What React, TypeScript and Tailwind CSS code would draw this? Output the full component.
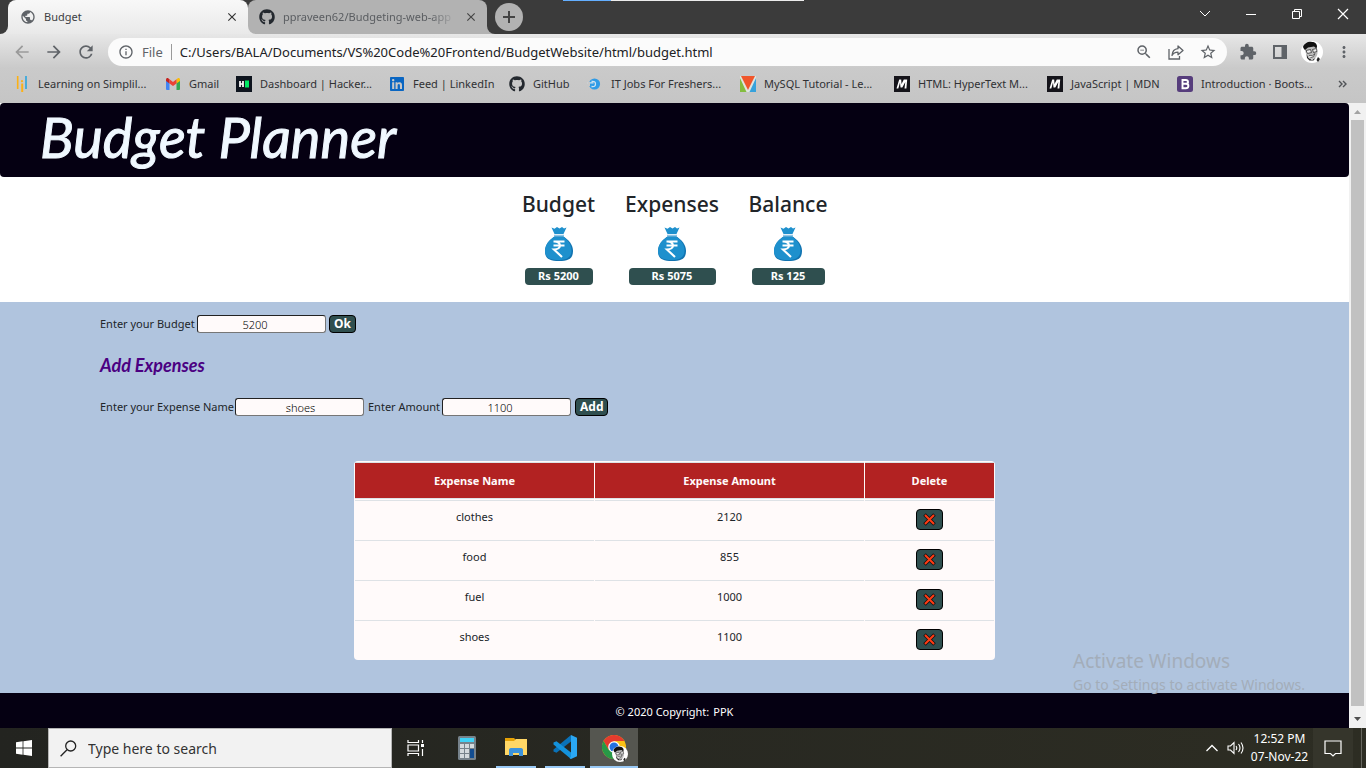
import React, { useState } from "react";
import {
  MdArrowBack,
  MdArrowForward,
  MdClose,
  MdExtension,
  MdInfoOutline,
  MdMoreVert,
  MdPublic,
  MdRefresh,
  MdStarBorder,
  MdZoomOut,
} from "react-icons/md";
import { FaGithub, FaLinkedin } from "react-icons/fa";

function Avatar({ className }: { className: string }) {
  return (
    <svg viewBox="0 0 22 22" className={className} aria-hidden="true">
      <circle cx="11" cy="11" r="11" fill="#fff" />
      <path d="M4 7c2-2 9-3 11-1l1.500 5c0 4-2 7-5 7-4 0-6-4-7-7z" fill="#bdbdbd" />
      <path d="M2 6C3 2 8 0 11 1c3 0 5 2 5 4.500l-.5 2-2.500-2-6 1L4 9 3 8z" fill="#111" />
      <path d="M5 9.500l4.500-1 1 3-4 1zM11.500 8.500l4-1 .5 3-3.500 1z" fill="#eee" stroke="#333" strokeWidth=".8" />
      <path d="M8 14.500q4 1.500 6-2-.5 4-5 4.500" fill="#fff" stroke="#333" strokeWidth=".7" />
      <path d="M5.500 13l2 4 3.500 2 3.500-2-2 2.500-4 0-2.500-2.500zM17 16l2 2-2 3-1.500-2z" fill="#222" />
    </svg>
  );
}

function SimpliIcon() {
  return (
    <svg viewBox="0 0 16 16" className="size-4">
      <path d="M3.7 0v13" stroke="#fbb116" strokeWidth="1.6" />
      <path d="M12 0v13" stroke="#3ba9dc" strokeWidth="1.8" />
      <path d="M8.2 7.5V16" stroke="#fbb116" strokeWidth="2" />
      <circle cx="8" cy="5.2" r="1.1" fill="#fbb116" />
    </svg>
  );
}
function GmailIcon() {
  return (
    <svg viewBox="0 0 16 16" className="size-4">
      <path d="M1 4v9a1 1 0 0 0 1 1h2.5V6.5z" fill="#4285f4" />
      <path d="M15 4v9a1 1 0 0 1-1 1h-2.500V6.500z" fill="#34a853" />
      <path d="M11.500 3.500v4L15 5V4c0-2-1.600-2.300-2.500-1.500z" fill="#fbbc04" />
      <path d="M4.500 3.500v4L1 5V4c0-2 1.600-2.300 2.500-1.500z" fill="#c5221f" />
      <path d="M4.500 3.300L8 6l3.500-2.700v4.200L8 10 4.500 7.500z" fill="#ea4335" />
    </svg>
  );
}
function HackerIcon() {
  return (
    <svg viewBox="0 0 16 16" className="size-4">
      <path d="M0 0h16v16H0z" fill="#0e141e" />
      <path d="M4 5v6M7 5v6M4 8h3" stroke="#fff" strokeWidth="1.700" />
      <path d="M9 4.500h4v7H9z" fill="#00ea64" />
    </svg>
  );
}
function JobsIcon() {
  return (
    <svg viewBox="0 0 16 16" className="size-4">
      <circle cx="7.500" cy="8" r="5.600" fill="#2f9be6" />
      <path d="M0 6.800h6.500M4.500 5.500q4-.8 4 2.500t-4 2.500" fill="none" stroke="#cfe3f0" strokeWidth="1.300" />
      <path d="M0 4.500l3 1.500v4l-2 0z" fill="#c8c8c8" />
    </svg>
  );
}
function MysqlIcon() {
  return (
    <svg viewBox="0 0 16 16" className="size-4">
      <path d="M0 0h16v16H0z" fill="#dfe5de" />
      <path d="M1 0h14L8 14z" fill="#f0562b" />
      <path d="M0 2l6.500 14H0z" fill="#83bd3f" />
      <path d="M16 2L9.500 16H16z" fill="#36a2dc" />
    </svg>
  );
}
function MdnIcon() {
  return (
    <svg viewBox="0 0 16 16" className="size-4">
      <path d="M0 0h16v16H0z" fill="#15141a" />
      <path d="M2.500 12.500L5.200 3.500h2l.3 4.500 2.300-4.500h3.400l-.8 9h-1.900l.8-6.500-3 5.500H6.500L6 6.500l-1.700 6z" fill="#fff" />
    </svg>
  );
}
function BootstrapIcon() {
  return (
    <svg viewBox="0 0 16 16" className="size-4">
      <rect width="16" height="16" rx="2.500" fill="#563d7c" />
      <path d="M5.500 4h3.300c2.800 0 2.900 3.300.5 3.800 3 .4 2.700 4.400-.5 4.400H5.500zM6 7.800h3.500" fill="none" stroke="#fff" strokeWidth="1.900" />
    </svg>
  );
}

const bookmarks = [
  { label: "Learning on Simplil...", icon: <SimpliIcon />, width: "w-[151px]" },
  { label: "Gmail", icon: <GmailIcon />, width: "w-[71px]" },
  { label: "Dashboard | Hacker...", icon: <HackerIcon />, width: "w-[153px]" },
  { label: "Feed | LinkedIn", icon: <FaLinkedin className="size-4 text-[#0a66c2]" />, width: "w-[120px]" },
  { label: "GitHub", icon: <FaGithub className="size-4 text-[#24292f]" />, width: "w-[78px]" },
  { label: "IT Jobs For Freshers...", icon: <JobsIcon />, width: "w-[153px]" },
  { label: "MySQL Tutorial - Le...", icon: <MysqlIcon />, width: "w-[154px]" },
  { label: "HTML: HyperText M...", icon: <MdnIcon />, width: "w-[153px]" },
  { label: "JavaScript | MDN", icon: <MdnIcon />, width: "w-[130px]" },
  { label: "Introduction · Boots...", icon: <BootstrapIcon />, width: "w-[150px]" },
];

function TabStrip() {
  return (
    <div className="flex h-[34px] bg-[#3b3b3b]">
      <div className="w-2 bg-[#e9e9e9]"><div className="h-full rounded-br-lg bg-[#3b3b3b]" /></div>
      <div className="flex w-60 items-center rounded-t-lg bg-linear-to-b from-[#f8f8f8] to-[#e9e9e9] pr-[9px] pl-3">
        <MdPublic className="size-4 text-[#5f6368]" />
        <span className="ml-2 flex-1 text-[#3c4043]">Budget</span>
        <button aria-label="Close Budget tab"><MdClose className="size-3.5 text-[#333]" /></button>
      </div>
      <div className="bg-linear-to-b from-[#3b3b3b] from-50% to-[#e9e9e9] to-50%">
        <div className="flex h-full w-[239px] items-center rounded-t-lg rounded-bl-lg bg-[#b2b2b2] pr-[9px] pl-[11px] text-[#5a5d61]">
          <FaGithub className="size-4 shrink-0 text-[#24292f]" />
          <span className="ml-2 flex-1 overflow-hidden whitespace-nowrap mask-r-from-85%">ppraveen62/Budgeting-web-app</span>
          <button aria-label="Close repository tab" className="ml-2"><MdClose className="size-3.5 text-[#444]" /></button>
        </div>
      </div>
      <div className="w-2 bg-[#b2b2b2]"><div className="h-full rounded-bl-lg bg-[#3b3b3b]" /></div>
      <button aria-label="New tab" className="mt-[3px] grid size-7 place-items-center rounded-full bg-[#b2b2b2]">
        <svg viewBox="0 0 12 12" className="size-3"><path d="M6 0v12M0 6h12" stroke="#444" strokeWidth="2" /></svg>
      </button>
      <div className="ml-auto flex h-7 text-white">
        <button aria-label="Search tabs" className="grid w-[46px] place-items-center">
          <svg viewBox="0 0 12 12" className="size-3"><path d="M1 3l5 5 5-5" fill="none" stroke="currentColor" /></svg>
        </button>
        <button aria-label="Minimize" className="grid w-[46px] place-items-center">
          <svg viewBox="0 0 12 12" className="size-3"><path d="M1 6.500h10" stroke="currentColor" /></svg>
        </button>
        <button aria-label="Restore" className="grid w-[46px] place-items-center">
          <svg viewBox="0 0 12 12" className="size-3"><path d="M1.500 3.500h7v7h-7zM3.500 3.500v-2h7v7h-2" fill="none" stroke="currentColor" /></svg>
        </button>
        <button aria-label="Close" className="grid w-[46px] place-items-center">
          <svg viewBox="0 0 12 12" className="size-3"><path d="M1 1l10 10M11 1L1 11" stroke="currentColor" strokeWidth="1.200" /></svg>
        </button>
      </div>
    </div>
  );
}

function Toolbar() {
  return (
    <div className="flex h-[34px] items-center bg-linear-to-b from-[#e7e7e7] to-[#cacaca] pt-1 pb-0.5 text-[#5f6368]">
      <button aria-label="Back" className="ml-3 text-[#9a9a9a]"><MdArrowBack className="size-5" /></button>
      <button aria-label="Forward" className="ml-3"><MdArrowForward className="size-5" /></button>
      <button aria-label="Reload" className="ml-3"><MdRefresh className="size-5" /></button>
      <div className="ml-3 flex h-7 flex-1 items-center rounded-full bg-[#fbfbfb] px-2.5 text-[13px]">
        <MdInfoOutline className="size-4" />
        <span className="ml-2">File</span>
        <span className="mx-2 h-4 w-px bg-[#9a9a9a]" />
        <input
          aria-label="Address"
          className="min-w-0 flex-1 bg-transparent text-[#202124] outline-none"
          defaultValue="C:/Users/BALA/Documents/VS%20Code%20Frontend/BudgetWebsite/html/budget.html"
        />
        <button aria-label="Zoom"><MdZoomOut className="size-[18px]" /></button>
        <button aria-label="Share" className="ml-[15px]">
          <svg viewBox="0 0 16 16" className="size-4" fill="none" stroke="currentColor" strokeWidth="1.300">
            <path d="M1 5v10h10.500v-3" />
            <path d="M10 2l5 4.500-5 4.200V8.200C7 8.200 5 9.500 4 11.500c.3-4 2.500-6.500 6-6.800z" strokeLinejoin="round" />
          </svg>
        </button>
        <button aria-label="Bookmark this page" className="ml-[15px]"><MdStarBorder className="size-[18px]" /></button>
      </div>
      <button aria-label="Extensions" className="ml-3"><MdExtension className="size-[18px]" /></button>
      <button aria-label="Side panel" className="ml-4">
        <svg viewBox="0 0 14 14" className="size-3.5"><path d="M1 1h12v12H1z" fill="none" stroke="currentColor" strokeWidth="2" /><path d="M8.500 1H13v12H8.500z" fill="currentColor" /></svg>
      </button>
      <button aria-label="Profile" className="ml-3.5"><Avatar className="size-[22px]" /></button>
      <button aria-label="Menu" className="mr-[13px] ml-3"><MdMoreVert className="size-[18px]" /></button>
    </div>
  );
}

function Bookmarks() {
  return (
    <nav className="flex h-[35px] items-center overflow-hidden bg-linear-to-b from-[#cacaca] to-[#c5c5c5] pb-1 pl-3.5 text-[#303134]">
      {bookmarks.map((b, i) => (
        <a key={i} href="#" className={"flex shrink-0 items-center gap-2 whitespace-nowrap " + b.width}>
          <span className="shrink-0">{b.icon}</span>
          {b.label}
        </a>
      ))}
      <button aria-label="More bookmarks" className="mr-4.5 ml-auto">
        <svg viewBox="0 0 10 8" className="h-2 w-2.5"><path d="M1 1l3 3-3 3M5 1l3 3-3 3" fill="none" stroke="#505357" strokeWidth="1.400" /></svg>
      </button>
    </nav>
  );
}

function MoneyBag() {
  return (
    <svg viewBox="0 0 32 36" className="h-9 w-8" aria-hidden="true">
      <path d="M8.500 1.500l3 1.200L14 1l2.500 1.500L19 1l2 1.500 2.500-1L20.500 8h-9z" fill="#1e90cd" />
      <path d="M11 8.700h10v1.300H11z" fill="#8fc6e6" />
      <path d="M11.500 10.500h9C26 14 30 19 30 25c0 8-5 10-14 10S2 33 2 25c0-6 4-11 9.500-14.500z" fill="#1173b0" />
      <path d="M11.500 10.500h9C25 14 28.500 19 28.500 24.500c0 7-5 9.500-13 9.500S2 32 2 25c0-6 4-11 9.500-14.500z" fill="#1e90cd" />
      <path d="M10.500 15.500h11M10.500 19.500h11M11 15.500c8 0 8 8 0 8l8 7.500" fill="none" stroke="#fff" strokeWidth="2.100" />
    </svg>
  );
}

const totals = [
  { title: "Budget", amount: 5200, width: "w-[74px]" },
  { title: "Expenses", amount: 5075, width: "w-[93px]" },
  { title: "Balance", amount: 125, width: "w-[79px]" },
];

const initialExpenses = [
  { name: "clothes", amount: 2120 },
  { name: "food", amount: 855 },
  { name: "fuel", amount: 1000 },
  { name: "shoes", amount: 1100 },
];

const fieldClass =
  "h-[18px] w-[129px] rounded-[3px] border border-t-[#222] border-l-[#222] border-r-[#767676] border-b-[#767676] bg-[#fffafa] pr-0.5 pl-1 text-center font-light text-black";
const actionClass =
  "h-[18px] rounded-[4px] border border-black bg-[#2f4f4f] px-1 text-[12px] leading-4 font-bold text-white";

function BudgetPage() {
  const [expenses, setExpenses] = useState(initialExpenses);
  return (
    <div className="flex min-w-0 flex-1 flex-col bg-white text-[#212529]">
      <header className="flex h-[74px] items-center rounded bg-[#050012] px-10 pb-1.5">
        <h1 className="font-[Lato,'Liberation_Sans',sans-serif] text-[56px] leading-[68px] text-[#f0f8ff] italic [-webkit-text-stroke:1px_#f0f8ff]">Budget Planner</h1>
      </header>

      <section className="flex h-[125px] justify-center gap-[30px] pt-3">
        {totals.map((t) => (
          <div key={t.title} className={"flex flex-col items-center " + t.width}>
            <h2 className="text-[21px] leading-[30px] font-medium">{t.title}</h2>
            <div className="mt-[7px]"><MoneyBag /></div>
            <div className="mt-1.5 self-stretch px-[3px]">
              <p className="rounded bg-[#2f4f4f] pb-px text-center leading-4 font-bold text-white">Rs {t.amount}</p>
            </div>
          </div>
        ))}
      </section>

      <main className="relative flex-1 bg-[#b0c4de] pt-[13px]">
        <form className="flex items-center pl-[100px]" onSubmit={(e) => e.preventDefault()}>
          <label htmlFor="budget" className="w-[97px]">Enter your Budget</label>
          <input id="budget" type="number" defaultValue={5200} className={fieldClass} />
          <button className={actionClass + " ml-[3px]"}>Ok</button>
        </form>
        <h3 className="mt-5 pl-[100px] font-[Lato,sans-serif] text-[18px] leading-6 font-bold text-[#4b0082] italic">Add Expenses</h3>
        <form className="mt-[21px] flex items-center pl-[100px]" onSubmit={(e) => e.preventDefault()}>
          <label htmlFor="name" className="w-[135px]">Enter your Expense Name</label>
          <input id="name" type="text" defaultValue="shoes" className={fieldClass} />
          <label htmlFor="amount" className="ml-1 w-[74px]">Enter Amount</label>
          <input id="amount" type="number" defaultValue={1100} className={fieldClass} />
          <button className={actionClass + " ml-1"}>Add</button>
        </form>

        <table className="mx-auto mt-[45px] w-[641px] table-fixed border-separate border-spacing-px rounded bg-[#fffafa] text-center">
          <colgroup>
            <col className="w-[239px]" />
            <col className="w-[269px]" />
            <col className="w-[129px]" />
          </colgroup>
          <thead>
            <tr className="h-[37px] text-[#fffafa]">
              <th className="border-y border-[#dee2e6] bg-[#b22222]">Expense Name</th>
              <th className="border-y border-[#dee2e6] bg-[#b22222]">Expense Amount</th>
              <th className="border-y border-[#dee2e6] bg-[#b22222]">Delete</th>
            </tr>
          </thead>
          <tbody>
            {expenses.map((x) => (
              <tr key={x.name} className="h-[39px] align-top">
                <td className="border-t border-[#dee2e6] pt-2">{x.name}</td>
                <td className="border-t border-[#dee2e6] pt-2">{x.amount}</td>
                <td className="border-t border-[#dee2e6] pt-2">
                  <button
                    aria-label={"Delete " + x.name}
                    onClick={() => setExpenses(expenses.filter((e) => e !== x))}
                    className="mx-auto grid h-[21px] w-[27px] place-items-center rounded-[4px] border border-black bg-[#2f4f4f]"
                  >
                    <svg viewBox="0 0 13 13" className="size-[13px]">
                      <path d="M1.500 1.500l10 10M11.500 1.500l-10 10" stroke="#1a1010" strokeWidth="3.600" />
                      <path d="M2 2l9 9M11 2l-9 9" stroke="#ff3c14" strokeWidth="2" />
                    </svg>
                  </button>
                </td>
              </tr>
            ))}
          </tbody>
        </table>

        <div className="absolute right-10 bottom-0 w-[236px] whitespace-nowrap text-[#a3adb9]">
          <p className="mb-1 text-[19px] leading-6">Activate Windows</p>
          <p className="text-sm leading-4">Go to Settings to activate Windows.</p>
        </div>
      </main>

      <footer className="flex h-[35px] items-center justify-center gap-1 bg-[#050012] pt-0.5 text-white">
        © 2020 Copyright: <a href="#">PPK</a>
      </footer>
    </div>
  );
}

function Scrollbar() {
  return (
    <div className="flex w-[17px] shrink-0 flex-col items-center bg-[#f1f1f1]" aria-hidden="true">
      <svg viewBox="0 0 17 17" className="size-[17px]"><path d="M5 11l3.500-4 3.500 4z" fill="#a3a3a3" /></svg>
      <div className="w-[13px] flex-1 bg-[#c1c1c1]" />
      <div className="h-[5px]" />
      <svg viewBox="0 0 17 17" className="size-[17px]"><path d="M5 6l3.500 4L12 6z" fill="#505050" /></svg>
    </div>
  );
}

function Taskbar() {
  return (
    <div className="flex h-10 shrink-0 bg-linear-to-r from-[#232420] to-[#2d2d23] text-white">
      <button aria-label="Start" className="grid w-12 place-items-center">
        <svg viewBox="0 0 16 16" className="size-4" fill="#fff"><path d="M0 2.200l6.600-.9v6.300H0zM7.400 1.200L16 0v7.600H7.400zM0 8.400h6.600v6.300L0 13.800zM7.400 8.400H16V16l-8.600-1.200z" /></svg>
      </button>
      <label className="flex w-[344px] items-center border border-[#b5b5b5] bg-[#f2f2f2] pl-[11px]">
        <svg viewBox="0 0 17 17" className="size-[17px]" fill="none" stroke="#222" strokeWidth="1.300"><circle cx="10.700" cy="6" r="5" /><path d="M7 9.700L.6 16.300" /></svg>
        <input aria-label="Search" placeholder="Type here to search" className="ml-[11px] min-w-0 flex-1 bg-transparent pt-0.5 text-sm outline-none placeholder:text-[#333]" />
      </label>
      <button aria-label="Task view" className="grid w-12 place-items-center">
        <svg viewBox="0 0 18 16" className="h-4 w-[18px]" fill="none" stroke="#fff" strokeWidth="1.200">
          <path d="M1 0v2.500h10.500V0M1 16v-2.500h10.500V16M1 5h10.500v6H1zM15.500 0v3M15.500 9v7" /><path d="M14 4h3v3h-3z" fill="#fff" stroke="none" />
        </svg>
      </button>
      <button aria-label="Calculator" className="ml-0.5 grid w-[50px] place-items-center">
        <svg viewBox="0 0 18 24" className="h-6 w-[18px]">
          <rect width="18" height="24" rx="1.500" fill="#76828b" /><path d="M2 2h14v4H2z" fill="#3fd2f7" />
          <path d="M2 8h4v4H2zM7 8h4v4H7zM12 8h4v4h-4zM2 13h4v4H2zM7 13h4v4H7zM2 18h4v4H2zM7 18h4v4H7z" fill="#d3dade" /><path d="M12 13h4v9h-4z" fill="#124d91" />
        </svg>
      </button>
      <button aria-label="File Explorer" className="mx-1 grid w-10 place-items-center border-b-2 border-[#99c9f5]">
        <svg viewBox="0 0 22 18" className="h-[18px] w-[22px]">
          <path d="M0 0h9l2 2v4H0z" fill="#e5a106" /><path d="M0 3h9l2-2h11v16H0z" fill="#ffd766" />
          <path d="M4 18v-6c0-1 .5-2 2-2h10c1.500 0 2 1 2 2v6h-4v-3H8v3z" fill="#3c93dc" />
        </svg>
      </button>
      <button aria-label="Visual Studio Code" className="mx-[5px] grid w-10 place-items-center border-b-2 border-[#99c9f5]">
        <svg viewBox="0 0 24 24" className="size-6">
          <path d="M18 0v6.500L3.500 17.800.5 16.500v-2z" fill="#0a72b8" /><path d="M18 24v-6.500L3.500 6.200.5 7.500v2z" fill="#1492dc" />
          <path d="M18 0l6 2.800v18.400L18 24l-1.500-1L18 22z" fill="#2aa7f3" />
        </svg>
      </button>
      <button aria-label="Google Chrome" className="relative grid w-12 place-items-center border-b-2 border-[#99c9f5] bg-[#555650]">
        <svg viewBox="0 0 24 24" className="size-6">
          <circle cx="12" cy="12" r="12" fill="#fbc116" />
          <path d="M1.600 6A12 12 0 0 1 22.400 6H12l-5.200 9z" fill="#e33b2e" />
          <path d="M1.600 6A12 12 0 0 0 12 24l5.200-9H6.800z" fill="#279847" />
          <circle cx="12" cy="12" r="5.800" fill="#fff" /><circle cx="12" cy="12" r="4.500" fill="#2471df" />
        </svg>
        <span className="absolute right-2.5 bottom-1"><Avatar className="size-4" /></span>
      </button>
      <div className="ml-auto flex items-center">
        <button aria-label="Show hidden icons">
          <svg viewBox="0 0 14 8" className="h-2 w-3.5"><path d="M1.500 7L7 1.500 12.500 7" fill="none" stroke="#fff" strokeWidth="1.300" /></svg>
        </button>
        <button aria-label="Volume" className="ml-2">
          <svg viewBox="0 0 18 14" className="h-3.5 w-[18px]" fill="none" stroke="#fff" strokeWidth="1.100">
            <path d="M1 5h2.500L7 1.500v11L3.500 9H1zM9 5q1.500 2 0 4M11.500 3q3 4 0 8M14 1.500q4 5.500 0 11" />
          </svg>
        </button>
        <div className="mr-1 ml-[5px] w-[59px] text-center text-[12px] leading-[18px] whitespace-nowrap">
          <div>12:52 PM</div>
          <div>07-Nov-22</div>
        </div>
        <button aria-label="Notifications" className="grid h-full w-10 place-items-center bg-[#35352b]">
          <svg viewBox="0 0 18 17" className="h-[17px] w-[18px]" fill="none" stroke="#fff" strokeWidth="1.200"><path d="M1 1h16v12.500h-5.500L9 16l-2.500-2.500H1z" /></svg>
        </button>
        <span className="mr-1 ml-2 h-full w-px bg-[#66665e]" />
      </div>
    </div>
  );
}

export default function App() {
  return (
    <div className="relative flex min-h-screen flex-col font-['Noto_Sans','Open_Sans',sans-serif] text-[11px] leading-4">
      <div className="absolute top-0 left-[563px] flex h-px w-[241px]" aria-hidden="true">
        <span className="w-12 bg-[#63aeff]" />
        <span className="flex-1 bg-[#ececec]" />
      </div>
      <TabStrip />
      <Toolbar />
      <Bookmarks />
      <div className="flex flex-1">
        <BudgetPage />
        <Scrollbar />
      </div>
      <Taskbar />
    </div>
  );
}
